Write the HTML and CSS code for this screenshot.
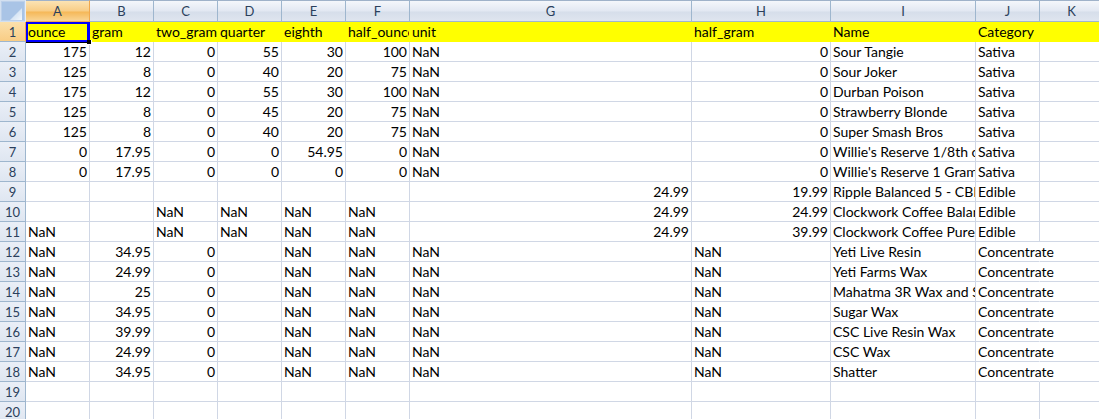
FILE: index.html
```html
<!DOCTYPE html>
<html lang="en">
<head>
<meta charset="utf-8">
<title>Sheet</title>
<link rel="stylesheet" href="styles.css">
</head>
<body>
<table class="sheet">
<colgroup><col class="c-row"><col class="c-n"><col class="c-n"><col class="c-n"><col class="c-n"><col class="c-n"><col class="c-n"><col class="c-g"><col class="c-h"><col class="c-i"><col class="c-n"><col class="c-n"></colgroup>
<thead>
<tr><th class="corner"><svg class="tri" viewBox="0 0 12 12"><defs><linearGradient id="triFill" x1="0" y1="0" x2="1" y2="1"><stop offset="0.4" stop-color="#cfe0f3"/><stop offset="1" stop-color="#f4f8fc"/></linearGradient></defs><path fill="url(#triFill)" d="M12 0V12H0Z"/></svg></th><th class="sel">A</th><th>B</th><th>C</th><th>D</th><th>E</th><th>F</th><th>G</th><th>H</th><th>I</th><th>J</th><th>K</th></tr>
</thead>
<tbody>
<tr class="yellow"><th class="sel">1</th><td class="active">ounce<span class="handle"></span></td><td>gram</td><td>two_gram</td><td>quarter</td><td>eighth</td><td>half_ounce</td><td>unit</td><td>half_gram</td><td>Name</td><td>Category</td><td></td></tr>
<tr><th>2</th><td class="r">175</td><td class="r">12</td><td class="r">0</td><td class="r">55</td><td class="r">30</td><td class="r">100</td><td>NaN</td><td class="r">0</td><td>Sour Tangie</td><td>Sativa</td><td></td></tr>
<tr><th>3</th><td class="r">125</td><td class="r">8</td><td class="r">0</td><td class="r">40</td><td class="r">20</td><td class="r">75</td><td>NaN</td><td class="r">0</td><td>Sour Joker</td><td>Sativa</td><td></td></tr>
<tr><th>4</th><td class="r">175</td><td class="r">12</td><td class="r">0</td><td class="r">55</td><td class="r">30</td><td class="r">100</td><td>NaN</td><td class="r">0</td><td>Durban Poison</td><td>Sativa</td><td></td></tr>
<tr><th>5</th><td class="r">125</td><td class="r">8</td><td class="r">0</td><td class="r">45</td><td class="r">20</td><td class="r">75</td><td>NaN</td><td class="r">0</td><td>Strawberry Blonde</td><td>Sativa</td><td></td></tr>
<tr><th>6</th><td class="r">125</td><td class="r">8</td><td class="r">0</td><td class="r">40</td><td class="r">20</td><td class="r">75</td><td>NaN</td><td class="r">0</td><td>Super Smash Bros</td><td>Sativa</td><td></td></tr>
<tr><th>7</th><td class="r">0</td><td class="r">17.95</td><td class="r">0</td><td class="r">0</td><td class="r">54.95</td><td class="r">0</td><td>NaN</td><td class="r">0</td><td>Willie's Reserve 1/8th oz</td><td>Sativa</td><td></td></tr>
<tr><th>8</th><td class="r">0</td><td class="r">17.95</td><td class="r">0</td><td class="r">0</td><td class="r">0</td><td class="r">0</td><td>NaN</td><td class="r">0</td><td>Willie's Reserve 1 Gram</td><td>Sativa</td><td></td></tr>
<tr><th>9</th><td></td><td></td><td></td><td></td><td></td><td></td><td class="r">24.99</td><td class="r">19.99</td><td>Ripple Balanced 5 - CBD</td><td>Edible</td><td></td></tr>
<tr><th>10</th><td></td><td></td><td>NaN</td><td>NaN</td><td>NaN</td><td>NaN</td><td class="r">24.99</td><td class="r">24.99</td><td>Clockwork Coffee Balanced</td><td>Edible</td><td></td></tr>
<tr><th>11</th><td>NaN</td><td></td><td>NaN</td><td>NaN</td><td>NaN</td><td>NaN</td><td class="r">24.99</td><td class="r">39.99</td><td>Clockwork Coffee Pure</td><td>Edible</td><td></td></tr>
<tr><th>12</th><td>NaN</td><td class="r">34.95</td><td class="r">0</td><td></td><td>NaN</td><td>NaN</td><td>NaN</td><td>NaN</td><td>Yeti Live Resin</td><td class="spill">Concentrate</td><td></td></tr>
<tr><th>13</th><td>NaN</td><td class="r">24.99</td><td class="r">0</td><td></td><td>NaN</td><td>NaN</td><td>NaN</td><td>NaN</td><td>Yeti Farms Wax</td><td class="spill">Concentrate</td><td></td></tr>
<tr><th>14</th><td>NaN</td><td class="r">25</td><td class="r">0</td><td></td><td>NaN</td><td>NaN</td><td>NaN</td><td>NaN</td><td>Mahatma 3R Wax and Shatter</td><td class="spill">Concentrate</td><td></td></tr>
<tr><th>15</th><td>NaN</td><td class="r">34.95</td><td class="r">0</td><td></td><td>NaN</td><td>NaN</td><td>NaN</td><td>NaN</td><td>Sugar Wax</td><td class="spill">Concentrate</td><td></td></tr>
<tr><th>16</th><td>NaN</td><td class="r">39.99</td><td class="r">0</td><td></td><td>NaN</td><td>NaN</td><td>NaN</td><td>NaN</td><td>CSC Live Resin Wax</td><td class="spill">Concentrate</td><td></td></tr>
<tr><th>17</th><td>NaN</td><td class="r">24.99</td><td class="r">0</td><td></td><td>NaN</td><td>NaN</td><td>NaN</td><td>NaN</td><td>CSC Wax</td><td class="spill">Concentrate</td><td></td></tr>
<tr><th>18</th><td>NaN</td><td class="r">34.95</td><td class="r">0</td><td></td><td>NaN</td><td>NaN</td><td>NaN</td><td>NaN</td><td>Shatter</td><td class="spill">Concentrate</td><td></td></tr>
<tr><th>19</th><td></td><td></td><td></td><td></td><td></td><td></td><td></td><td></td><td></td><td></td><td></td></tr>
<tr><th>20</th><td></td><td></td><td></td><td></td><td></td><td></td><td></td><td></td><td></td><td></td><td></td></tr>
</tbody>
</table>
</body>
</html>
```
FILE: styles.css
```css
html, body { margin: 0; height: 100%; overflow: hidden; background: #fff; }
.sheet {
  table-layout: fixed;
  width: 1103px;
  border-collapse: separate;
  border-spacing: 0;
  font-family: "Lato", "Liberation Sans", sans-serif;
  font-size: 14px;
  color: #000;
}
.c-row { width: 26px; }
.c-n { width: 64px; }
.c-g { width: 282px; }
.c-h { width: 139px; }
.c-i { width: 145px; }
thead th {
  height: 20px;
  padding: 0;
  font-weight: 400;
  font-size: 13px;
  color: #2b3f5c;
  text-align: center;
  border-top: 1px solid #9fb2c9;
  border-right: 1px solid #9eb6ce;
  border-bottom: 1px solid #9eb6ce;
  background: linear-gradient(#f4f7fb, #e2e8f2 50%, #d6deea 55%, #dfe5ef);
  box-sizing: content-box;
}
thead th.corner {
  background: #a9c4e6;
  border: 1px solid #d3e0f0;
  border-right-color: #e7eef7;
  box-shadow: inset 0 0 0 1px #bcd0ea;
}
.tri { display: block; width: 12px; height: 12px; margin: 6px 3px 0 auto; }
thead th.sel { background: linear-gradient(#fbe3b4, #f8cd86 50%, #f5b858 55%, #f9d596); border-right-color: #f1a84d; border-bottom-color: #f1a84d; }
tbody th {
  height: 19px;
  padding: 0;
  font-weight: 400;
  font-size: 13px;
  color: #2b3f5c;
  text-align: center;
  background: linear-gradient(#eaeff7, #dfe6f1);
  border-right: 1px solid #9eb6ce;
  border-bottom: 1px solid #9eb6ce;
}
tbody th.sel { background: linear-gradient(#fbe0ac, #f9cd85); border-right-color: #f1a84d; }
td {
  height: 19px;
  padding: 0 2px;
  overflow: hidden;
  white-space: nowrap;
  border-right: 1px solid #d0d7e5;
  border-bottom: 1px solid #d0d7e5;
  line-height: 19px;
}
td.r { text-align: right; }
td.spill { overflow: visible; border-right-color: transparent; }
.yellow td { background: #ff0; border-right-color: #ff0; border-bottom-color: #ff0; }
.yellow td.active {
  position: relative;
  overflow: visible;
}
.yellow td.active::after {
  content: "";
  position: absolute;
  inset: 0 -1px -1px 0;
  border: solid #0000ff;
  border-width: 2px 3px 2px 2px;
  box-shadow: 0 1px 0 #000;
  pointer-events: none;
}
.handle {
  position: absolute;
  right: -3px;
  bottom: -4px;
  width: 4px;
  height: 4px;
  background: #000;
  border: 1px solid #fff;
  border-width: 0 1px 1px 0;
  z-index: 2;
}
```
